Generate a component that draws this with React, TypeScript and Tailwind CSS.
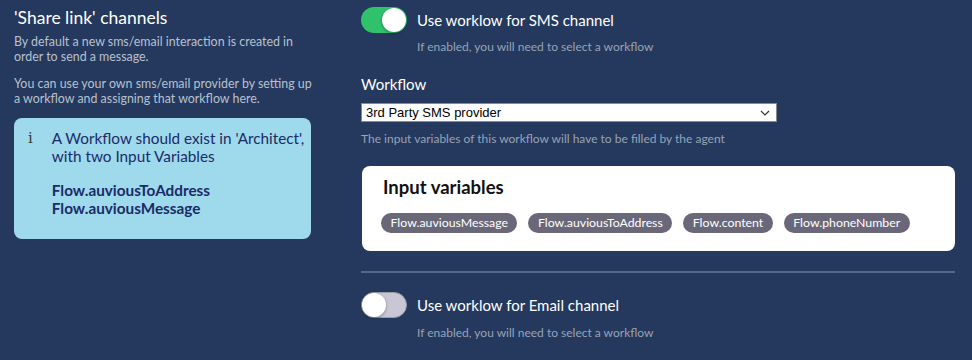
import React from "react"

function Toggle({ on }: { on: boolean }): React.ReactElement {
  return (
    <div
      className={
        on
          ? "relative h-[26px] w-[46px] shrink-0 rounded-full bg-[#2fc26b]"
          : "relative h-[26px] w-[46px] shrink-0 rounded-full border border-[#9a9aa8] bg-[#c9c7d6]"
      }
    >
      <div
        className={
          on
            ? "absolute right-[1px] top-[1px] h-[24px] w-[24px] rounded-full bg-white shadow-[0_1px_3px_rgba(0,0,0,0.35)]"
            : "absolute left-[0px] top-[0px] h-[24px] w-[24px] rounded-full bg-white shadow-[0_1px_3px_rgba(0,0,0,0.35)]"
        }
      />
    </div>
  )
}

const chips = ["Flow.auviousMessage", "Flow.auviousToAddress", "Flow.content", "Flow.phoneNumber"]

export default function App(): React.ReactElement {
  return (
    <div className="flex h-[360px] w-[972px] gap-[50px] overflow-hidden bg-[#24395d] pl-[14px] font-['Lato',sans-serif] text-white">
      <div className="flex w-[297px] shrink-0 flex-col pt-[7px]">
        <h2 className="text-[17.5px] leading-[22px]">'Share link' channels</h2>
        <p className="mt-[5px] whitespace-nowrap text-[12.4px] leading-[15px] text-[#b9c1cf]">
          By default a new sms/email interaction is created in
          <br />
          order to send a message.
        </p>
        <p className="mt-[12px] whitespace-nowrap text-[12.4px] leading-[15px] text-[#b9c1cf]">
          You can use your own sms/email provider by setting up
          <br />
          a workflow and assigning that workflow here.
        </p>
        <div className="mt-[12px] flex h-[121px] gap-[19px] rounded-[8px] bg-[#9ed9ec] pl-[14px] pt-[11px] text-[#1b2b68]">
          <span className="font-['DejaVu_Serif',serif] text-[15px] leading-[18px] text-[#3a3a3a]">i</span>
          <div className="whitespace-nowrap text-[15.3px] leading-[18px]">
            <p>
              A Workflow should exist in 'Architect',
              <br />
              with two Input Variables
            </p>
            <p className="mt-[16px] font-bold">
              Flow.auviousToAddress
              <br />
              Flow.auviousMessage
            </p>
          </div>
        </div>
      </div>
      <div className="flex w-[594px] shrink-0 flex-col pt-[7px]">
        <div className="flex items-center gap-[10px]">
          <Toggle on={true} />
          <span className="text-[15px]">Use worklow for SMS channel</span>
        </div>
        <p className="ml-[56px] mt-[6px] text-[12px] leading-[16px] text-[#98a3b6]">
          If enabled, you will need to select a workflow
        </p>
        <p className="mt-[19px] text-[15px] leading-[20px]">Workflow</p>
        <div className="mt-[9px] flex h-[19px] w-[416px] items-center justify-between border border-[#8a8a8a] bg-white pl-[4px] pr-[6px] font-['Liberation_Sans',sans-serif] text-[13px] text-black">
          <span>3rd Party SMS provider</span>
          <svg width="10" height="6" viewBox="0 0 10 6">
            <path d="M1 1 L5 5 L9 1" fill="none" stroke="#333" strokeWidth="1.2" />
          </svg>
        </div>
        <p className="mt-[9px] text-[12px] leading-[16px] text-[#98a3b6]">
          The input variables of this workflow will have to be filled by the agent
        </p>
        <div className="ml-[1px] mt-[19px] h-[85px] w-[593px] rounded-[8px] bg-white pl-[21px] pt-[9px] text-[#111]">
          <h3 className="text-[18.5px] font-bold leading-[24px]">Input variables</h3>
          <div className="-ml-[2px] mt-[14px] flex gap-[11px]">
            {chips.map((c) => (
              <span
                key={c}
                className="flex h-[20px] items-center rounded-full bg-[#6a6878] px-[9.5px] text-[12.3px] text-white"
              >
                {c}
              </span>
            ))}
          </div>
        </div>
        <div className="mt-[20px] h-[2px] w-[594px] bg-[#55688a]" />
        <div className="mt-[19px] flex items-center gap-[10px]">
          <Toggle on={false} />
          <span className="text-[15px]">Use worklow for Email channel</span>
        </div>
        <p className="ml-[56px] mt-[7px] text-[12px] leading-[16px] text-[#98a3b6]">
          If enabled, you will need to select a workflow
        </p>
      </div>
    </div>
  )
}
